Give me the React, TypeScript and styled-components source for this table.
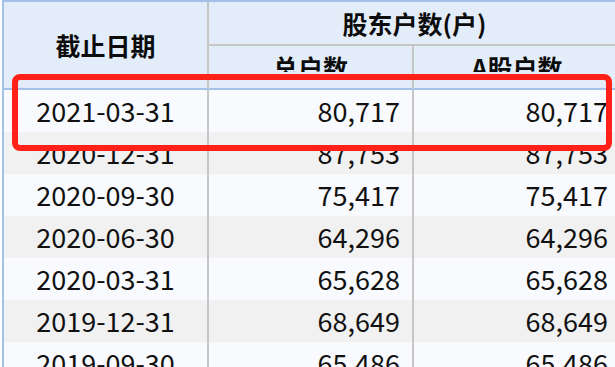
import styled, { createGlobalStyle } from "styled-components";

const GlobalStyle = createGlobalStyle`
	html, body {
		margin: 0;
		padding: 0;
		background: #ffffff;
	}
	body {
		font-family: "Noto Sans CJK SC", "Noto Sans", sans-serif;
		color: #111111;
		overflow: hidden;
	}
`;

const Wrapper = styled.div`
	position: relative;
	width: 615px;
	height: 367px;
	overflow: hidden;
	padding-left: 2px;
	box-sizing: border-box;
`;

const Table = styled.table`
	border-collapse: separate;
	border-spacing: 0;
	table-layout: fixed;
	width: 618px;
	border-top: 2px solid #a2c0e8;
	border-left: 2px solid #a2c0e8;
`;

const HeadCell = styled.th<{ $last?: boolean; $split?: boolean; $bottom?: boolean; $tall?: boolean }>`
	background: #e3ecf9;
	font-size: 25px;
	font-weight: 700;
	color: #0c0c0c;
	text-align: center;
	vertical-align: top;
	padding: 0;
	height: 42px;
	line-height: ${(p) => (p.$tall ? "86px" : "42px")};
	border-right: ${(p) => (p.$last ? "none" : "2px solid #c6c6c6")};
	border-bottom: ${(p) =>
		p.$bottom ? "2px solid #a2c0e8" : p.$split ? "2px solid #c6c6c6" : "none"};
`;

const ClippedLabel = styled.div`
	height: 26px;
	padding-top: 9px;
	line-height: 25px;
	overflow: hidden;
	box-sizing: border-box;
`;

const Row = styled.tr<{ $alt: boolean }>`
	background: ${(p) => (p.$alt ? "#f1f1f1" : "#f8fafd")};
`;

const Cell = styled.td<{ $align: "center" | "right"; $last?: boolean }>`
	height: 42px;
	padding: 0 ${(p) => (p.$align === "right" ? "12px" : "0")} 0 0;
	font-size: 27px;
	line-height: 42px;
	text-align: ${(p) => p.$align};
	border-right: ${(p) => (p.$last ? "none" : "2px solid #c6c6c6")};
	white-space: nowrap;
	overflow: hidden;
	box-sizing: border-box;
`;

const Highlight = styled.div`
	position: absolute;
	left: 12px;
	top: 74px;
	width: 600px;
	height: 77px;
	border: 6px solid #ff2019;
	border-radius: 8px;
	box-sizing: border-box;
	pointer-events: none;
`;

const rows = [
	{ date: "2021-03-31", total: "80,717", a: "80,717" },
	{ date: "2020-12-31", total: "87,753", a: "87,753" },
	{ date: "2020-09-30", total: "75,417", a: "75,417" },
	{ date: "2020-06-30", total: "64,296", a: "64,296" },
	{ date: "2020-03-31", total: "65,628", a: "65,628" },
	{ date: "2019-12-31", total: "68,649", a: "68,649" },
	{ date: "2019-09-30", total: "65,486", a: "65,486" },
];

const App = () => {
	return (
		<>
			<GlobalStyle />
			<Wrapper>
				<Table>
					<colgroup>
						<col style={{ width: 205 }} />
						<col style={{ width: 205 }} />
						<col style={{ width: 206 }} />
					</colgroup>
					<thead>
						<tr>
							<HeadCell rowSpan={2} $bottom $tall>
								截止日期
							</HeadCell>
							<HeadCell colSpan={2} $last $split>
								股东户数(户)
							</HeadCell>
						</tr>
						<tr>
							<HeadCell $bottom>
								<ClippedLabel>总户数</ClippedLabel>
							</HeadCell>
							<HeadCell $bottom $last>
								<ClippedLabel>A股户数</ClippedLabel>
							</HeadCell>
						</tr>
					</thead>
					<tbody>
						{rows.map((r, i) => (
							<Row key={r.date} $alt={i % 2 === 1}>
								<Cell $align="center">{r.date}</Cell>
								<Cell $align="right">{r.total}</Cell>
								<Cell $align="right" $last>
									{r.a}
								</Cell>
							</Row>
						))}
					</tbody>
				</Table>
				<Highlight />
			</Wrapper>
		</>
	);
};

export default App;
